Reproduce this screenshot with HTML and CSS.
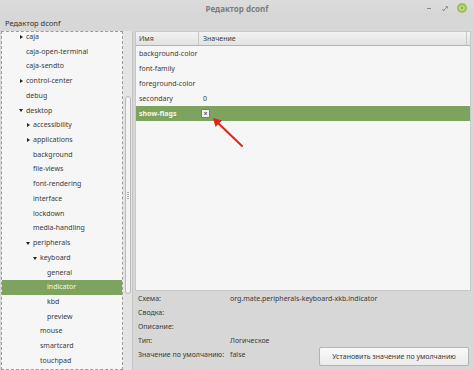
FILE: index.html
```html
<!DOCTYPE html>
<html>
<head>
<meta charset="utf-8">
<link rel="stylesheet" href="styles.css">
</head>
<body>
<div class="window">
  <div class="titlebar">
    <div></div>
    <div class="title">Редактор dconf</div>
    <div class="controls">
      <svg class="ctl" width="10" height="10" viewBox="0 0 10 10"><rect x="3" y="5" width="4" height="1" fill="#8a8a8a"/></svg>
      <svg class="ctl" width="10" height="10" viewBox="0 0 10 10"><path d="M4 7 L7 4 M5.5 3.5 H7.5 V5.5 M3 6 V7.5 H4.5" stroke="#8a8a8a" stroke-width="0.9" fill="none"/></svg>
      <svg class="ctl close" width="12" height="12" viewBox="0 0 12 12"><circle cx="6" cy="6" r="5" fill="#9cc25c"/><circle cx="6" cy="6" r="2.6" fill="#c9e39a"/><circle cx="6" cy="6" r="1.4" fill="#86b040"/></svg>
    </div>
  </div>
  <div class="menubar">Редактор dconf</div>
  <div class="main">
    <div class="treebox">
      <div class="tree">
        <div class="tree-inner">
          <div class="row d1"><span class="exp tri-r"></span>caja</div>
          <div class="row d1"><span class="exp"></span>caja-open-terminal</div>
          <div class="row d1"><span class="exp"></span>caja-sendto</div>
          <div class="row d1"><span class="exp tri-r"></span>control-center</div>
          <div class="row d1"><span class="exp"></span>debug</div>
          <div class="row d1"><span class="exp tri-d"></span>desktop</div>
          <div class="row d2"><span class="exp tri-r"></span>accessibility</div>
          <div class="row d2"><span class="exp tri-r"></span>applications</div>
          <div class="row d2"><span class="exp"></span>background</div>
          <div class="row d2"><span class="exp"></span>file-views</div>
          <div class="row d2"><span class="exp"></span>font-rendering</div>
          <div class="row d2"><span class="exp"></span>interface</div>
          <div class="row d2"><span class="exp"></span>lockdown</div>
          <div class="row d2"><span class="exp"></span>media-handling</div>
          <div class="row d2"><span class="exp tri-d"></span>peripherals</div>
          <div class="row d3"><span class="exp tri-d"></span>keyboard</div>
          <div class="row d4"><span class="exp"></span>general</div>
          <div class="row d4 sel"><span class="exp"></span>indicator</div>
          <div class="row d4"><span class="exp"></span>kbd</div>
          <div class="row d4"><span class="exp"></span>preview</div>
          <div class="row d3"><span class="exp"></span>mouse</div>
          <div class="row d3"><span class="exp"></span>smartcard</div>
          <div class="row d3"><span class="exp"></span>touchpad</div>
        </div>
      </div>
      <div class="vscroll"><div class="thumb"><span class="grip"></span></div></div>
    </div>
    <div class="rightcol">
      <div class="list">
        <div class="lhead">
          <div class="hc c1">Имя</div>
          <div class="hc c2">Значение</div>
          <div class="hc c3"></div>
        </div>
        <div class="lrow"><div class="c1">background-color</div><div class="c2"></div></div>
        <div class="lrow"><div class="c1">font-family</div><div class="c2"></div></div>
        <div class="lrow"><div class="c1">foreground-color</div><div class="c2"></div></div>
        <div class="lrow"><div class="c1">secondary</div><div class="c2">0</div></div>
        <div class="lrow sel"><div class="c1 bold">show-flags</div><div class="c2"><span class="check">×</span></div></div>
        <svg class="arrow" width="40" height="40" viewBox="0 0 40 40">
          <line x1="34" y1="34" x2="9" y2="10" stroke="#e2231a" stroke-width="2" stroke-linecap="round"/>
          <path d="M5 6 L14 8.5 L7.5 15 Z" fill="#e2231a"/>
        </svg>
      </div>
      <div class="info">
        <div class="igrid">
          <div>Схема:</div><div>org.mate.peripherals-keyboard-xkb.indicator</div>
          <div>Сводка:</div><div></div>
          <div>Описание:</div><div></div>
          <div>Тип:</div><div>Логическое</div>
          <div>Значение по умолчанию:</div><div>false</div>
        </div>
        <button class="btn">Установить значение по умолчанию</button>
      </div>
    </div>
  </div>
</div>
</body>
</html>
```
FILE: styles.css
```css
html, body {
  margin: 0;
  padding: 0;
}
body {
  width: 474px;
  height: 370px;
  overflow: hidden;
  font-family: "Noto Sans", "Open Sans", sans-serif;
  font-size: 7px;
  color: #3b3b3b;
}
.window {
  width: 474px;
  height: 370px;
  background: #d7d7d7;
  display: flex;
  flex-direction: column;
}
.titlebar {
  height: 16px;
  display: grid;
  grid-template-columns: 1fr auto 1fr;
  align-items: center;
  background: linear-gradient(#dcdcdc, #d6d6d6);
}
.title {
  font-weight: bold;
  color: #7d7d7d;
  font-size: 8px;
}
.controls {
  display: flex;
  justify-content: flex-end;
  align-items: center;
  gap: 6px;
  padding-right: 6px;
}
.ctl { display: block; }
.menubar {
  height: 15px;
  line-height: 15px;
  padding-left: 5px;
  font-size: 7.5px;
  color: #333;
}
.main {
  flex: 1;
  display: flex;
  gap: 2px;
  padding-left: 1px;
  padding-right: 3px;
  min-height: 0;
}
.treebox {
  display: flex;
  width: 132px;
  flex: none;
}
.tree {
  width: 121px;
  border: 1px dashed #9a9a9a;
  background: #f6f6f6;
  overflow: hidden;
}
.tree-inner {
  margin-top: -2px;
}
.row {
  height: 14.73px;
  line-height: 14.73px;
  display: flex;
  align-items: center;
  white-space: nowrap;
}
.row.d1 { padding-left: 17px; }
.row.d2 { padding-left: 24px; }
.row.d3 { padding-left: 31px; }
.row.d4 { padding-left: 38px; }
.row.sel {
  background: #7ea35e;
  color: #f4f8ee;
}
.exp {
  width: 7px;
  height: 7px;
  flex: none;
  position: relative;
}
.tri-r::before {
  content: "";
  position: absolute;
  left: 1px;
  top: 1px;
  border-left: 3.5px solid #222;
  border-top: 2.5px solid transparent;
  border-bottom: 2.5px solid transparent;
}
.tri-d::before {
  content: "";
  position: absolute;
  left: 0px;
  top: 2px;
  border-top: 3.5px solid #222;
  border-left: 2.5px solid transparent;
  border-right: 2.5px solid transparent;
}
.vscroll {
  width: 9px;
  background: #e4e4e4;
  border-right: 1px solid #c4c4c4;
  position: relative;
}
.thumb {
  position: absolute;
  left: 2px;
  width: 4px;
  top: 65px;
  height: 196px;
  background: #f3f3f3;
  border: 1px solid #b9b9b9;
  border-radius: 3px;
}
.grip {
  position: absolute;
  left: 1px;
  top: 95px;
  width: 2px;
  height: 8px;
  background: repeating-linear-gradient(#aaa 0 1px, transparent 1px 2px);
}
.rightcol {
  flex: 1;
  display: flex;
  flex-direction: column;
  min-width: 0;
}
.list {
  height: 258px;
  background: #f6f6f6;
  border: 1px solid #c8c8c8;
  position: relative;
}
.lhead {
  height: 13px;
  display: flex;
  background: linear-gradient(#f3f3f3, #e2e2e2);
  border-bottom: 1px solid #b3b3b3;
}
.hc {
  line-height: 13px;
  border-right: 1px solid #c9c9c9;
  color: #3b3b3b;
}
.c1 {
  width: 59px;
  padding-left: 3px;
  flex: none;
}
.c2 {
  width: 263px;
  padding-left: 4px;
  flex: none;
}
.hc.c3 {
  flex: 1;
  border-right: none;
}
.lrow {
  height: 15px;
  line-height: 15px;
  display: flex;
  white-space: nowrap;
}
.lrow .c1 { width: 60px; }
.lrow.sel {
  background: #7ea35e;
  color: #f4f8ee;
}
.bold { font-weight: bold; }
.check {
  display: inline-block;
  width: 7px;
  height: 7px;
  line-height: 7px;
  text-align: center;
  font-size: 7px;
  font-weight: bold;
  color: #555;
  background: #f2f2f2;
  border: 1px solid #6e8a52;
  border-radius: 1px;
  vertical-align: middle;
  margin-top: -2px;
  margin-left: -2px;
}
.arrow {
  position: absolute;
  left: 72px;
  top: 80px;
}
.info {
  flex: 1;
  display: flex;
  padding: 1px 2px 4px 3px;
}
.igrid {
  flex: 1;
  min-width: 0;
  display: grid;
  grid-template-columns: 92px minmax(0, 1fr);
  grid-auto-rows: 14px;
  line-height: 14px;
  white-space: nowrap;
  color: #3a3a3a;
}
.btn {
  flex: none;
  align-self: flex-end;
  width: 150px;
  height: 19px;
  padding: 0;
  white-space: nowrap;
  font-family: inherit;
  font-size: 7px;
  color: #3a3a3a;
  background: linear-gradient(#fafafa, #ebebeb);
  border: 1px solid #b4b4b4;
  border-radius: 2px;
}
```
